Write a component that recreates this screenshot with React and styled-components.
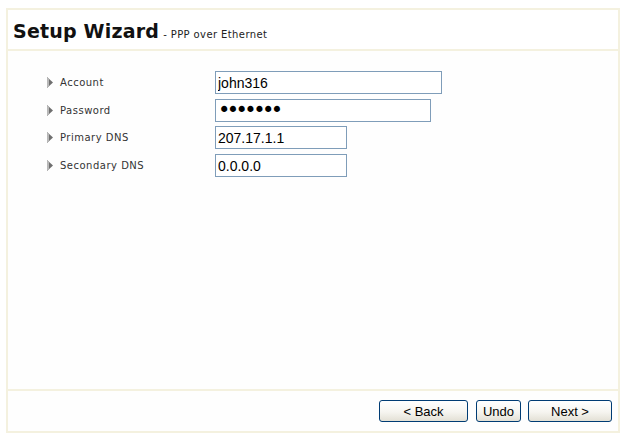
import React from 'react';
import styled, { createGlobalStyle } from 'styled-components';

const fields = [
  { label: 'Account', value: 'john316', width: 227 },
  { label: 'Password', value: 'secret1', width: 216, type: 'password' },
  { label: 'Primary DNS', value: '207.17.1.1', width: 132 },
  { label: 'Secondary DNS', value: '0.0.0.0', width: 132 },
];

const GlobalStyle = createGlobalStyle`
  body {
    margin: 0;
    background: #ffffff;
    font-family: "DejaVu Sans", Verdana, sans-serif;
  }
`;

const Frame = styled.div`
  box-sizing: border-box;
  width: 614px;
  height: 425px;
  margin: 8px 0 0 6px;
  border: 2px solid #f4f1df;
  display: flex;
  flex-direction: column;
  background: #fefefe;
`;

const Header = styled.div`
  height: 41px;
  border-bottom: 2px solid #f4f1df;
  display: flex;
  align-items: center;
  padding-left: 5px;
  padding-top: 3px;
  box-sizing: border-box;
  background: #ffffff;
`;

const Title = styled.h1`
  margin: 0;
  font-size: 19px;
  font-weight: bold;
  color: #111;
  letter-spacing: 0.2px;
`;

const Subtitle = styled.span`
  font-size: 10px;
  font-weight: normal;
  letter-spacing: 0.4px;
  color: #222;
  margin-left: 4px;
`;

const Body = styled.div`
  flex: 1;
  padding: 20px 0 0 39px;
  display: flex;
  flex-direction: column;
  gap: 4.7px;
`;

const Row = styled.div`
  display: grid;
  grid-template-columns: 168px auto;
  align-items: center;
`;

const Label = styled.div`
  display: flex;
  align-items: center;
  gap: 6px;
  font-size: 10px;
  letter-spacing: 0.5px;
  color: #333;
`;

const Field = styled.input`
  box-sizing: border-box;
  width: ${({ $w }) => $w}px;
  height: 23px;
  margin: 0;
  padding: 0 2px;
  border: 1px solid #7f9db9;
  background: #ffffff;
  font-family: "Liberation Sans", Arial, sans-serif;
  font-size: 14px;
  color: #000;
  outline: none;

  &[type='password'] {
    font-family: "DejaVu Sans", sans-serif;
    font-size: 21px;
    letter-spacing: -3.6px;
  }
`;

const Footer = styled.div`
  height: 42px;
  border-top: 2px solid #f4f1df;
  display: flex;
  align-items: center;
  justify-content: flex-end;
  padding: 0 6px 0 0;
  box-sizing: border-box;
  background: #fefefe;
`;

const Button = styled.button`
  box-sizing: border-box;
  width: ${({ $w }) => $w}px;
  height: 22px;
  margin-left: ${({ $gap }) => $gap}px;
  padding: 0;
  border: 1px solid #003c74;
  border-radius: 3px;
  background: linear-gradient(#ffffff 0%, #f6f5f0 55%, #e3e0d5 100%);
  font-family: "Liberation Sans", Arial, sans-serif;
  font-size: 13px;
  color: #000;
`;

const Arrow = () => (
  <svg width="7" height="11" viewBox="0 0 7 11">
    <polygon points="0,0 6,5.5 0,11" fill="#6f6f6f" />
    <polygon points="0,0 2,1.8 2,9.2 0,11" fill="#b8b8b8" />
  </svg>
);

export default function App() {
  return (
    <>
      <GlobalStyle />
      <Frame>
        <Header>
          <Title>
            Setup Wizard<Subtitle>- PPP over Ethernet</Subtitle>
          </Title>
        </Header>
        <Body>
          {fields.map((f) => (
            <Row key={f.label}>
              <Label>
                <Arrow />
                {f.label}
              </Label>
              <Field $w={f.width} type={f.type || 'text'} defaultValue={f.value} />
            </Row>
          ))}
        </Body>
        <Footer>
          <Button $w={89} $gap={0}>&lt; Back</Button>
          <Button $w={45} $gap={8}>Undo</Button>
          <Button $w={84} $gap={7}>Next &gt;</Button>
        </Footer>
      </Frame>
    </>
  );
}
